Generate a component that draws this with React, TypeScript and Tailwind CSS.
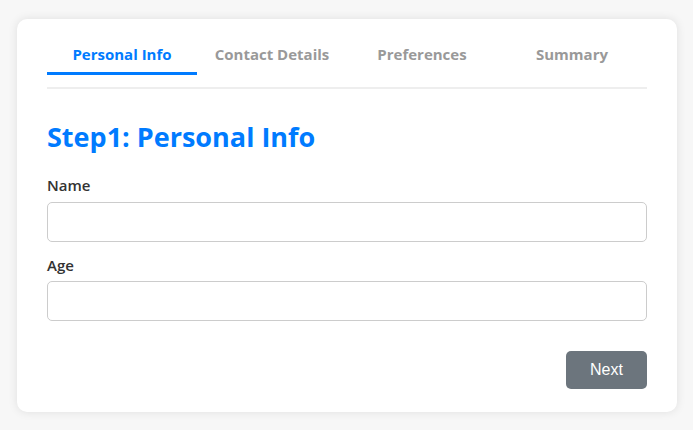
import { useState } from "react";

const tabs = ["Personal Info", "Contact Details", "Preferences", "Summary"];

export default function App() {
  const [active] = useState(0);
  return (
    <div
      className="min-h-screen bg-[#f7f7f7] pt-[19px] pl-[17px]"
      style={{ fontFamily: '"Open Sans", "Noto Sans", sans-serif' }}
    >
      <div className="w-[660px] bg-white rounded-[10px] shadow-[0_0_10px_rgba(0,0,0,0.1)] px-[30px] pt-[25px] pb-[23px]">
        <div className="flex">
          {tabs.map((t, i) => (
            <div
              key={t}
              className={
                i === active
                  ? "flex-1 text-center text-[15px] leading-[20px] font-bold pb-[8px] border-b-[3px] border-[#007bff] text-[#007bff]"
                  : "flex-1 text-center text-[15px] leading-[20px] font-bold pb-[8px] border-b-[3px] border-transparent text-[#999]"
              }
            >
              {t}
            </div>
          ))}
        </div>
        <div className="h-[2px] bg-[#eee] mt-[12px]" />

        <h2 className="mt-[30px] text-[27px] leading-[36px] font-bold text-[#007bff]">
          Step1: Personal Info
        </h2>

        <label className="block mt-[20px] mb-[7px] text-[15px] leading-[20px] font-semibold text-[#333]">
          Name
        </label>
        <input type="text" className="block w-full h-[40px] border border-[#ccc] rounded-[5px] px-[10px] outline-none" />

        <label className="block mt-[13px] mb-[6px] text-[15px] leading-[20px] font-semibold text-[#333]">
          Age
        </label>
        <input type="number" className="block w-full h-[40px] border border-[#ccc] rounded-[5px] px-[10px] outline-none" />

        <div className="flex justify-end mt-[30px]">
          <button
            className="w-[81px] h-[38px] rounded-[5px] bg-[#6c757d] text-white text-[16px]"
            style={{ fontFamily: '"Liberation Sans", Arial, sans-serif' }}
          >
            Next
          </button>
        </div>
      </div>
    </div>
  );
}
